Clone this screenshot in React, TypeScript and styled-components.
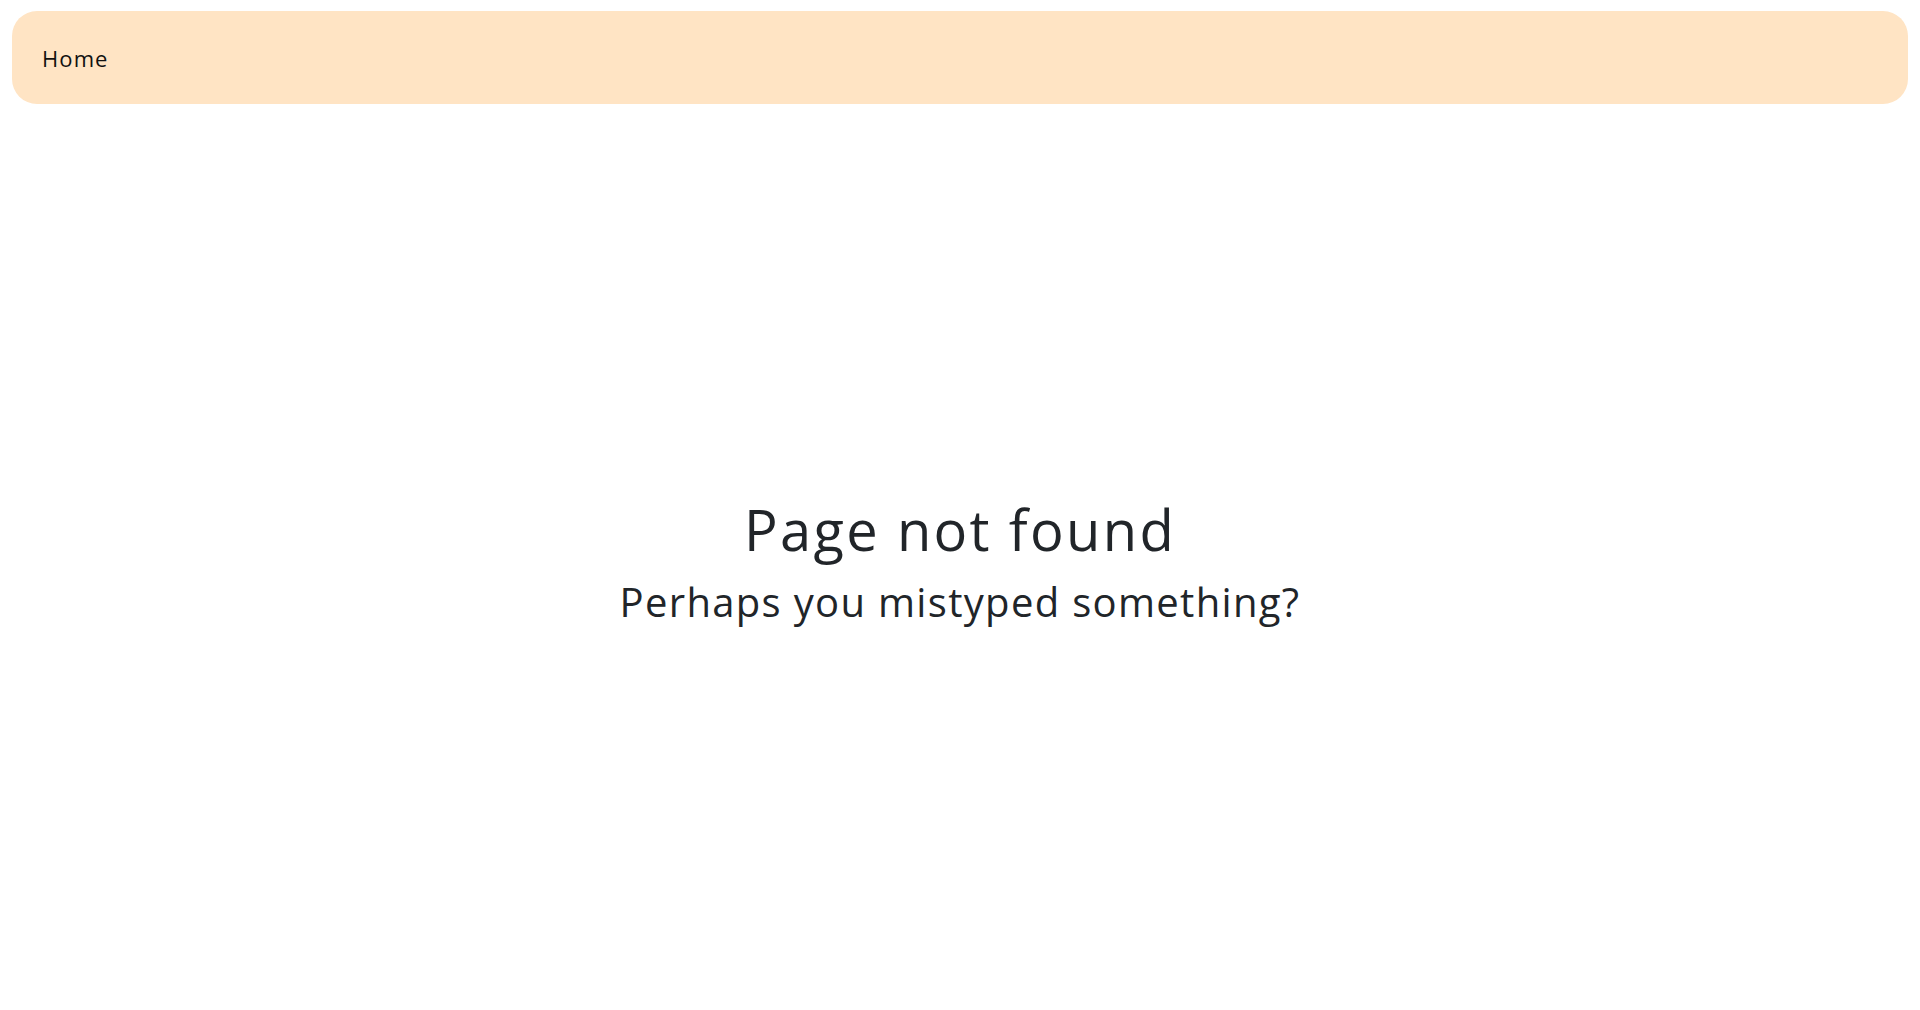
import React from "react";
import styled, { createGlobalStyle } from "styled-components";

const Global = createGlobalStyle`
  html, body { margin: 0; padding: 0; background: #ffffff; }
  body { font-family: "Open Sans", Lato, sans-serif; color: #212529; }
`;

const Page = styled.div`
  display: flex;
  flex-direction: column;
  min-height: 100vh;
  box-sizing: border-box;
  padding: 11px 12px 0;
`;

const NavBar = styled.nav`
  display: flex;
  align-items: center;
  height: 93px;
  padding: 0 30px;
  background: #ffe4c4;
  border-radius: 25px;
`;

const NavLink = styled.a`
  font-size: 22px;
  letter-spacing: 0.05em;
  color: #111;
  text-decoration: none;
`;

const Main = styled.main`
  flex: 1;
  display: flex;
  flex-direction: column;
  align-items: center;
  justify-content: center;
  padding-top: 8px;
`;

const Title = styled.h1`
  margin: 0 0 15px;
  font-size: 56px;
  font-weight: 400;
  letter-spacing: 0.042em;
  line-height: 1.2;
`;

const Subtitle = styled.h2`
  margin: 0;
  font-size: 40px;
  font-weight: 400;
  letter-spacing: 0.033em;
  line-height: 1.2;
`;

export default function App() {
  return (
    <>
      <Global />
      <Page>
        <NavBar>
          <NavLink href="#">Home</NavLink>
        </NavBar>
        <Main>
          <Title>Page not found</Title>
          <Subtitle>Perhaps you mistyped something?</Subtitle>
        </Main>
      </Page>
    </>
  );
}
